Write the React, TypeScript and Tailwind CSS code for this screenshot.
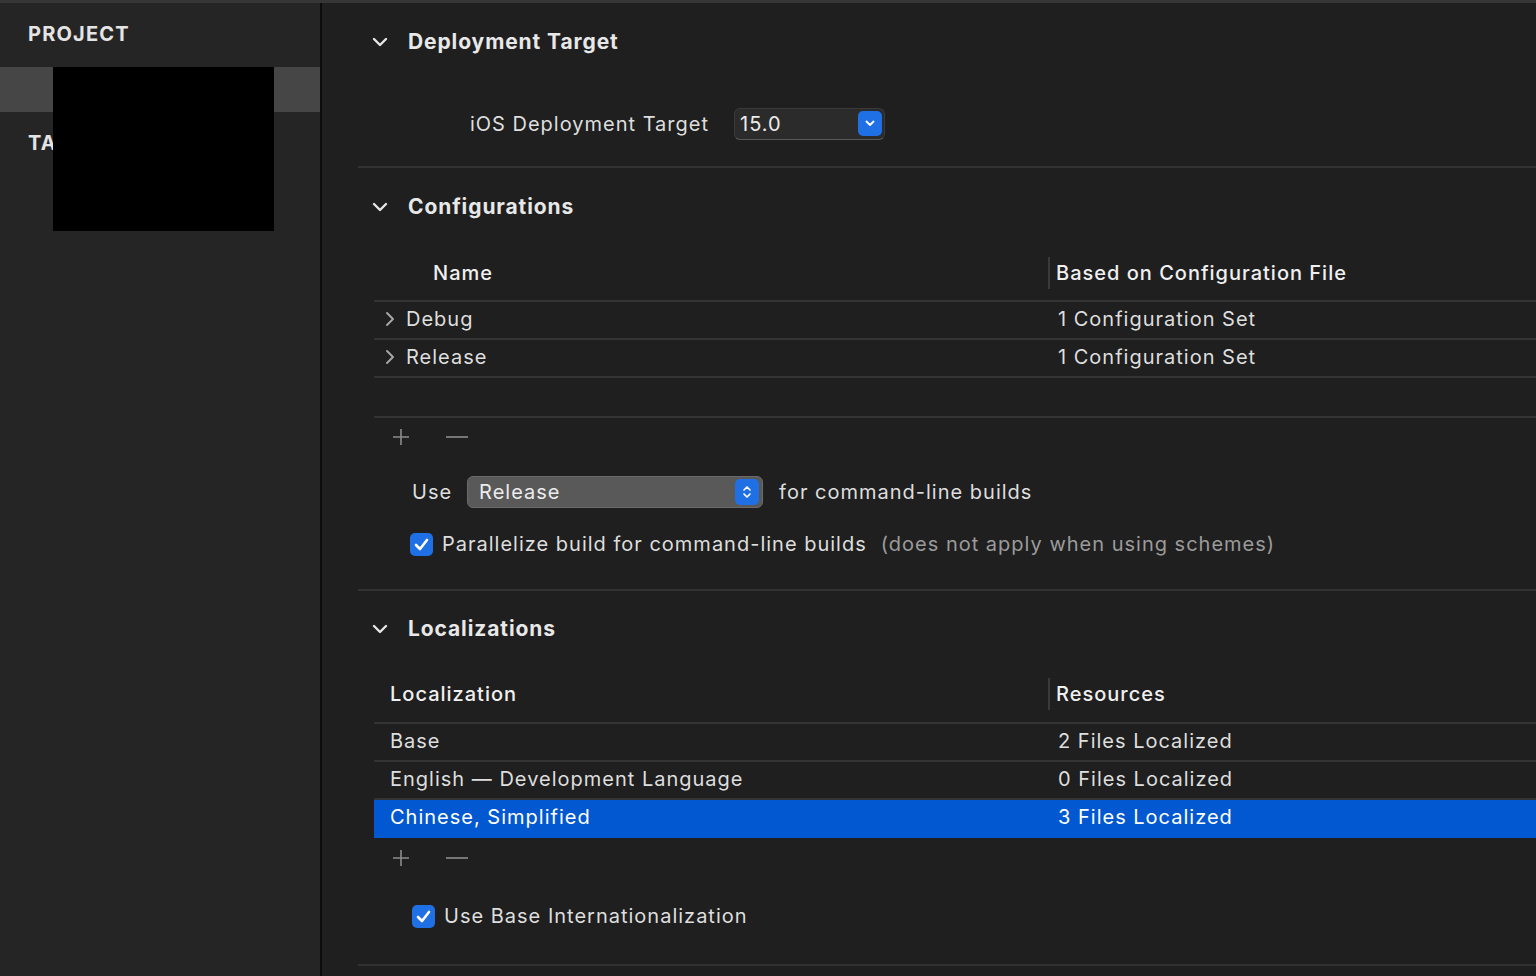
import type { ReactNode } from "react";

const font = { fontFamily: "Inter, 'Noto Sans', sans-serif" };

function ChevronDown() {
  return (
    <svg width="16" height="10" viewBox="0 0 16 10" className="shrink-0">
      <path d="M2 2 L8 8 L14 2" fill="none" stroke="#e6e6e6" strokeWidth="2.4" strokeLinecap="round" strokeLinejoin="round" />
    </svg>
  );
}

function ChevronRight() {
  return (
    <svg width="12" height="18" viewBox="0 0 12 18" className="shrink-0">
      <path d="M3 3 L9 9 L3 15" fill="none" stroke="#a8a8a8" strokeWidth="1.9" strokeLinecap="round" strokeLinejoin="round" />
    </svg>
  );
}

function PlusMinus() {
  return (
    <div className="flex items-center gap-[36px] pl-[18px]">
      <svg width="18" height="18" viewBox="0 0 18 18">
        <path d="M9 1 V17 M1 9 H17" stroke="#8c8c8c" strokeWidth="1.6" />
      </svg>
      <svg width="22" height="18" viewBox="0 0 22 18">
        <path d="M0 9 H22" stroke="#8c8c8c" strokeWidth="1.6" />
      </svg>
    </div>
  );
}

function Checkbox() {
  return (
    <div className="w-[23px] h-[23px] rounded-[5px] bg-[#1f6fe5] flex items-center justify-center shrink-0">
      <svg width="15" height="13" viewBox="0 0 15 13">
        <path d="M2 7 L6 11 L13 2" fill="none" stroke="#ffffff" strokeWidth="2.6" strokeLinecap="round" strokeLinejoin="round" />
      </svg>
    </div>
  );
}

function SectionHeader({ title, h }: { title: string; h: string }) {
  return (
    <div className={`flex items-center pl-[14px] ${h}`}>
      <ChevronDown />
      <span className="ml-[20px] text-[21px] font-bold text-[#e8e8e8] tracking-[0.9px]">{title}</span>
    </div>
  );
}

function Row({ left, right, selected, chevron, pl }: { left: string; right: string; selected?: boolean; chevron?: boolean; pl: string }) {
  return (
    <div
      className={`flex items-center h-[38px] pb-[2px] text-[20px] ${
        selected ? "bg-[#0258d0] text-white border-b-2 border-[#0258d0]" : "text-[#dedede] border-b-2 border-[#343434]"
      }`}
    >
      <div className={`w-[674px] flex items-center ${pl}`}>
        {chevron && (
          <span className="mr-[10px]">
            <ChevronRight />
          </span>
        )}
        {left}
      </div>
      <div className="pl-[10px]">{right}</div>
    </div>
  );
}

function TableHeader({ left, right, pl, h }: { left: string; right: string; pl: string; h: string }) {
  return (
    <div className={`flex items-center ${h} border-b-2 border-[#343434] text-[20px] text-[#f0f0f0] font-medium`}>
      <div className={`w-[674px] ${pl}`}>{left}</div>
      <div className="flex items-center">
        <div className="w-[2px] h-[32px] bg-[#3a3a3a]" />
        <span className="ml-[6px]">{right}</span>
      </div>
    </div>
  );
}

function Section({ children }: { children: ReactNode }) {
  return <div className="ml-[36px] border-b-2 border-[#323232] flex flex-col">{children}</div>;
}

export default function App() {
  return (
    <div className="w-[1536px] h-[976px] bg-[#1f1f1f] overflow-hidden flex flex-col tracking-[1px]" style={font}>
      <div className="h-[3px] bg-[#363636] shrink-0" />
      <div className="flex flex-1 min-h-0">
        <aside className="w-[320px] bg-[#252525] relative shrink-0">
          <div className="h-[64px] flex items-center pl-[28px] pb-[2px] text-[20px] font-bold text-[#e4e4e4] tracking-[1.2px]">PROJECT</div>
          <div className="h-[45px] bg-[#464646]" />
          <div className="h-[62px] flex items-center pl-[28px] text-[20px] font-bold text-[#e4e4e4] tracking-[1.2px]">TARGETS</div>
          <div className="absolute left-[53px] top-[64px] w-[221px] h-[164px] bg-black" />
        </aside>
        <div className="w-[2px] bg-[#0c0c0c] shrink-0" />
        <main className="flex-1 flex flex-col">
          <Section>
            <SectionHeader title="Deployment Target" h="h-[78px]" />
            <div className="h-[85px] flex items-center">
              <span className="w-[351px] text-right text-[20px] text-[#dedede]">iOS Deployment Target</span>
              <div className="ml-[25px] w-[151px] h-[32px] rounded-[6px] bg-[#2b2b2b] border border-[#3a3a3a] border-b-[#575757] flex items-center justify-between pl-[5px] pr-[2px]">
                <span className="text-[20px] text-[#ececec]">15.0</span>
                <div className="w-[24px] h-[25px] rounded-[5px] bg-[#1f6fe5] flex items-center justify-center">
                  <svg width="10" height="7" viewBox="0 0 10 7">
                    <path d="M1.5 1.5 L5 5 L8.5 1.5" fill="none" stroke="#fff" strokeWidth="1.8" strokeLinecap="round" strokeLinejoin="round" />
                  </svg>
                </div>
              </div>
            </div>
          </Section>

          <Section>
            <SectionHeader title="Configurations" h="h-[77px]" />
            <div className="ml-[16px] flex flex-col">
              <TableHeader left="Name" right="Based on Configuration File" pl="pl-[59px]" h="h-[57px]" />
              <Row left="Debug" right="1 Configuration Set" chevron pl="pl-[10px]" />
              <Row left="Release" right="1 Configuration Set" chevron pl="pl-[10px]" />
              <div className="h-[40px] border-b-2 border-[#343434]" />
              <div className="h-[38px] flex items-center">
                <PlusMinus />
              </div>
            </div>
            <div className="mt-[20px] h-[32px] flex items-center pl-[54px]">
              <span className="text-[20px] text-[#dedede]">Use</span>
              <div className="ml-[15px] w-[296px] h-[32px] rounded-[6px] bg-[#595959] border border-[#6a6a6a] flex items-center justify-between pl-[11px] pr-[3px]">
                <span className="text-[20px] text-[#ececec]">Release</span>
                <div className="w-[24px] h-[26px] rounded-[5px] bg-[#1f6fe5] flex items-center justify-center">
                  <svg width="10" height="16" viewBox="0 0 10 16">
                    <path d="M2 6 L5 3 L8 6 M2 10 L5 13 L8 10" fill="none" stroke="#fff" strokeWidth="1.7" strokeLinecap="round" strokeLinejoin="round" />
                  </svg>
                </div>
              </div>
              <span className="ml-[16px] text-[20px] text-[#dedede]">for command-line builds</span>
            </div>
            <div className="mt-[22px] h-[28px] mb-[31px] flex items-center pl-[52px]">
              <Checkbox />
              <span className="ml-[9px] text-[20px] text-[#dedede]">Parallelize build for command-line builds</span>
              <span className="ml-[14px] text-[20px] text-[#9b9b9b]">(does not apply when using schemes)</span>
            </div>
          </Section>

          <Section>
            <SectionHeader title="Localizations" h="h-[75px]" />
            <div className="ml-[16px] flex flex-col">
              <TableHeader left="Localization" right="Resources" pl="pl-[16px]" h="h-[58px]" />
              <Row left="Base" right="2 Files Localized" pl="pl-[16px]" />
              <Row left="English — Development Language" right="0 Files Localized" pl="pl-[16px]" />
              <Row left="Chinese, Simplified" right="3 Files Localized" selected pl="pl-[16px]" />
              <div className="h-[40px] flex items-center">
                <PlusMinus />
              </div>
            </div>
            <div className="h-[76px] mb-[10px] flex items-center pl-[54px]">
              <Checkbox />
              <span className="ml-[9px] text-[20px] text-[#dedede]">Use Base Internationalization</span>
            </div>
          </Section>
        </main>
      </div>
    </div>
  );
}
